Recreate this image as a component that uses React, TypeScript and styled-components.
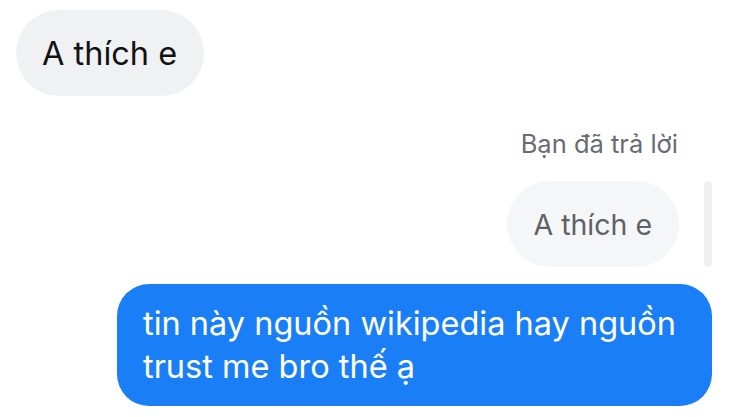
import styled, { createGlobalStyle } from "styled-components";

const GlobalStyle = createGlobalStyle`
  html, body {
    margin: 0;
    padding: 0;
    background: #ffffff;
  }
  body {
    font-family: Inter, "Liberation Sans", Arial, sans-serif;
    -webkit-font-smoothing: antialiased;
  }
`;

const Thread = styled.div`
  width: 730px;
  height: 417px;
  overflow: hidden;
  box-sizing: border-box;
  padding: 10px 18px 0 16px;
  display: flex;
  flex-direction: column;
`;

const Row = styled.div<{ $mine?: boolean }>`
  display: flex;
  justify-content: ${(p) => (p.$mine ? "flex-end" : "flex-start")};
`;

const Bubble = styled.div<{ $variant: "in" | "quote" }>`
  height: 86px;
  box-sizing: border-box;
  display: flex;
  align-items: center;
  padding: 0 27px 0 26px;
  border-radius: 43px;
  background: ${(p) => (p.$variant === "in" ? "#f0f1f3" : "#f5f6f7")};
  color: ${(p) => (p.$variant === "in" ? "#111214" : "#5e6165")};
  font-size: ${(p) => (p.$variant === "in" ? "32.5px" : "28.5px")};
`;

const ReplyBlock = styled.div`
  margin-top: 34px;
  display: flex;
  flex-direction: column;
  align-items: flex-end;
`;

const ReplyLabel = styled.div`
  margin-right: 34px;
  font-size: 25.5px;
  color: #686b70;
  line-height: 28px;
`;

const QuoteRow = styled.div`
  margin-top: 23px;
  display: flex;
  align-items: stretch;
  gap: 25px;
`;

const QuoteBar = styled.div`
  width: 8px;
  border-radius: 4px;
  background: #eef0f2;
`;

const OutBubble = styled.div`
  margin-top: 17px;
  width: 595px;
  box-sizing: border-box;
  padding: 18px 14px 18px 26px;
  border-radius: 32px;
  background: #1a7ff7;
  color: #ffffff;
  font-size: 32.5px;
  line-height: 43px;
`;

export default function App() {
  return (
    <>
      <GlobalStyle />
      <Thread>
        <Row>
          <Bubble $variant="in">A thích e</Bubble>
        </Row>
        <ReplyBlock>
          <ReplyLabel>Bạn đã trả lời</ReplyLabel>
          <QuoteRow>
            <Bubble $variant="quote">A thích e</Bubble>
            <QuoteBar />
          </QuoteRow>
        </ReplyBlock>
        <Row $mine>
          <OutBubble>tin này nguồn wikipedia hay nguồn trust me bro thế ạ</OutBubble>
        </Row>
      </Thread>
    </>
  );
}
